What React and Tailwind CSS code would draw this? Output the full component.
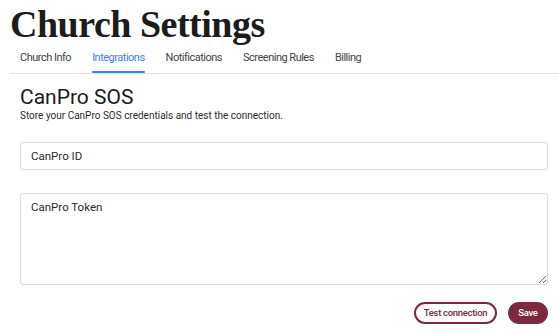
import { useState } from 'react';

const TABS = ['Church Info', 'Integrations', 'Notifications', 'Screening Rules', 'Billing'];

export default function App() {
  const [tab, setTab] = useState('Integrations');

  return (
    <div className="min-h-[334px] bg-white text-[#1f1f1f]" style={{ fontFamily: 'Roboto, "Liberation Sans", sans-serif' }}>
      <div className="pl-[10px]">
        <h1
          className="pt-[2px] text-[38px] font-bold leading-[44px] tracking-[-0.5px] text-[#1c1c1c]"
          style={{ fontFamily: '"Liberation Serif", "DejaVu Serif", serif' }}
        >
          Church Settings
        </h1>

        {/* Tabs */}
        <div className="flex border-b border-[#e3e3e3] pl-[10px]">
          {TABS.map((t) => (
            <button
              key={t}
              onClick={() => setTab(t)}
              className={`relative mr-[21px] pt-[4px] pb-[7px] text-[11px] leading-[16px] tracking-[-0.5px] ${
                tab === t ? 'text-[#3b82f6]' : 'text-[#444]'
              }`}
            >
              {t}
              {tab === t && (
                <span className="absolute bottom-0 left-0 right-0 h-[2px] rounded bg-[#3b82f6]" />
              )}
            </button>
          ))}
        </div>
      </div>

      <div className="pl-[20px] pr-[11px] pt-[11px]">
        <h2 className="text-[21px] leading-[24px] text-[#1a1a1a]">CanPro SOS</h2>
        <p className="text-[10px] leading-[14px] text-[#2c2c2c]">
          Store your CanPro SOS credentials and test the connection.
        </p>

        <div className="mt-[19px] flex flex-col gap-[23px]">
          <input
            placeholder="CanPro ID"
            className="h-[28px] w-full rounded-[3px] border border-[#dcdcdc] px-[10px] text-[11.5px] text-[#222] placeholder:text-[#2a2a2a] outline-none"
          />
          <textarea
            placeholder="CanPro Token"
            className="block h-[92px] w-full rounded-[3px] border border-[#dcdcdc] px-[10px] py-[6px] text-[11.5px] leading-[14px] text-[#222] placeholder:text-[#2a2a2a] outline-none"
          />
        </div>

        <div className="mt-[17px] flex justify-end gap-[11px]">
          <button className="h-[22px] w-[83px] rounded-full border-2 border-[#7b2a3e] bg-white text-[9.5px] font-medium tracking-[-0.3px] text-[#7b2a3e]">
            Test connection
          </button>
          <button className="h-[22px] w-[40px] rounded-full bg-[#7b2a3e] text-[9.5px] font-medium tracking-[-0.3px] text-white">
            Save
          </button>
        </div>
      </div>
    </div>
  );
}
